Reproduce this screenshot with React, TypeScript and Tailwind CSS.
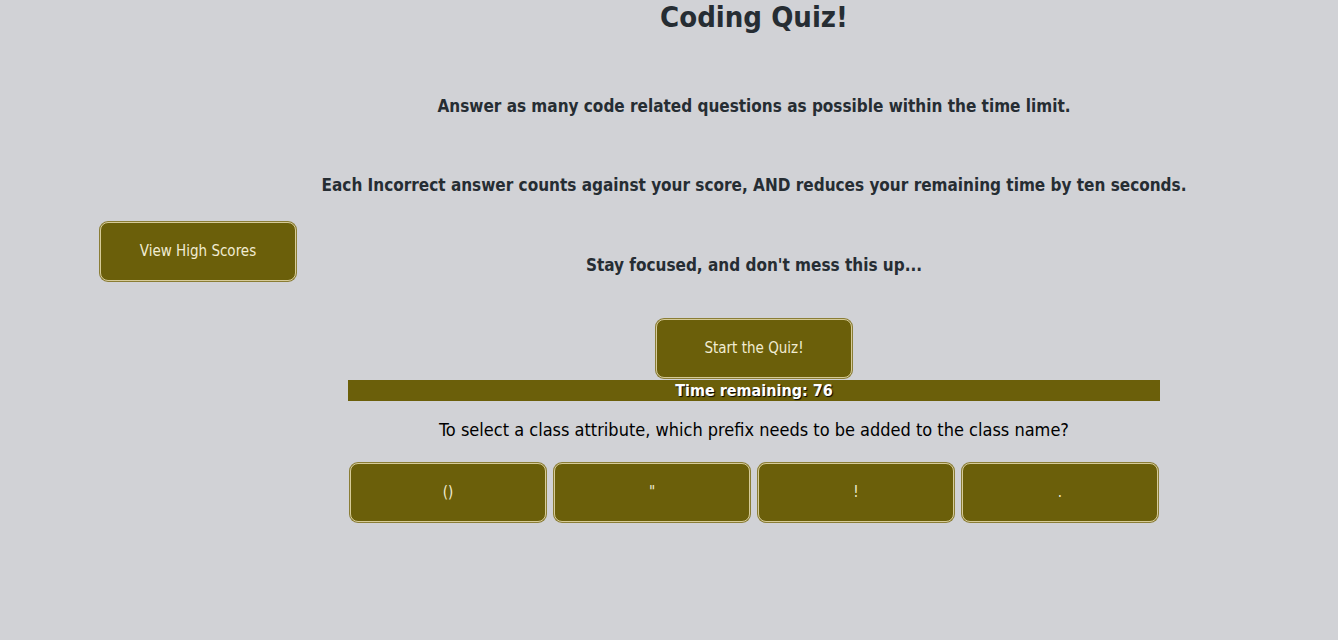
import { useState } from "react";

const answers = ["()", "\"", "!", "."];

const btn =
  "w-[196px] h-[59px] rounded-lg bg-[#6b5f0a] text-[#f1ecd2] text-[15px] border border-[#d6cb98] shadow-[0_0_0_1px_#8a7d35] flex items-center justify-center";

export default function App() {
  const [time] = useState(76);

  return (
    <div className="min-h-[640px] bg-[#d1d2d6] font-['DejaVu_Sans_Condensed',sans-serif] text-[#262d33]">
      <div className="flex">
        {/* left column */}
        <div className="w-[348px] shrink-0 pl-[100px] pt-[222px]">
          <button className={btn}>View High Scores</button>
        </div>

        {/* quiz */}
        <main className="w-[812px] flex flex-col items-center">
          <h1 className="text-[29px] font-bold leading-[34px] mt-0">Coding Quiz!</h1>

          <p className="whitespace-nowrap text-[17px] font-bold leading-[24px] mt-[60px]">
            Answer as many code related questions as possible within the time limit.
          </p>
          <p className="whitespace-nowrap text-[17px] font-bold leading-[24px] mt-[55px]">
            Each Incorrect answer counts against your score, AND reduces your remaining time by ten seconds.
          </p>
          <p className="whitespace-nowrap text-[17px] font-bold leading-[24px] mt-[56px]">
            Stay focused, and don't mess this up...
          </p>

          <button className={`${btn} mt-[42px]`}>Start the Quiz!</button>

          <div className="w-full h-[21px] mt-[2px] bg-[#6b5f0a] text-white text-[16px] font-bold leading-[22px] text-center [text-shadow:1px_1px_1px_#000]">
            Time remaining: {time}
          </div>

          <p className="text-[18px] text-black mt-[18px] leading-[22px]">
            To select a class attribute, which prefix needs to be added to the class name?
          </p>

          <div className="flex gap-2 mt-[22px]">
            {answers.map((a) => (
              <button key={a} className={btn}>
                {a}
              </button>
            ))}
          </div>
        </main>
      </div>
    </div>
  );
}
